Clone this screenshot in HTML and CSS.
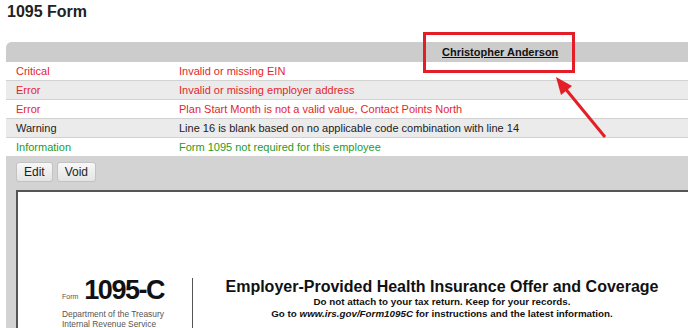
FILE: index.html
```html
<!DOCTYPE html>
<html lang="en">
<head>
    <meta charset="UTF-8">
    <meta name="viewport" content="width=device-width, initial-scale=1.0">
    <title>1095 Form</title>
    <link rel="stylesheet" href="styles.css">
</head>
<body>

<h1 class="page-title">1095 Form</h1>

<div class="panel">
    <div class="panel-head">
        <a href="#" class="emp-name">Christopher Anderson</a>
    </div>

    <div class="msgs">
        <div class="msg-row critical"><span>Critical</span><span>Invalid or missing EIN</span></div>
        <div class="msg-row error alt"><span>Error</span><span>Invalid or missing employer address</span></div>
        <div class="msg-row error"><span>Error</span><span>Plan Start Month is not a valid value, Contact Points North</span></div>
        <div class="msg-row warning alt"><span>Warning</span><span>Line 16 is blank based on no applicable code combination with line 14</span></div>
        <div class="msg-row info"><span>Information</span><span>Form 1095 not required for this employee</span></div>
    </div>

    <div class="actions">
        <button id="editForm">Edit</button>
        <button id="voidForm">Void</button>
    </div>

    <div class="viewer">
        <div class="form-doc">
            <div class="form-head">
                <div class="form-id">
                    <div class="form-num"><span class="form-word">Form</span> 1095-C</div>
                    <div class="dept">Department of the Treasury</div>
                    <div class="dept">Internal Revenue Service</div>
                </div>
                <div class="form-title">
                    <div class="title-main">Employer-Provided Health Insurance Offer and Coverage</div>
                    <div class="title-sub">Do not attach to your tax return. Keep for your records.</div>
                    <div class="title-sub">Go to <i>www.irs.gov/Form1095C</i> for instructions and the latest information.</div>
                </div>
            </div>
            <div class="part-row">
                <div class="part-label">Part I</div>
                <div class="part-name">Employee</div>
                <div class="part-right">Applicable Large Employer Member (Employer)</div>
            </div>
        </div>
    </div>
</div>

<!-- callout drawn over the screenshot -->
<svg class="callout" width="688" height="328" viewBox="0 0 688 328">
    <rect x="424.5" y="33.5" width="149" height="38" fill="none" stroke="#e41e26" stroke-width="3"/>
    <line x1="605" y1="137" x2="564" y2="87" stroke="#e41e26" stroke-width="3"/>
    <polygon points="556,77 572,86 561,95" fill="#e41e26"/>
</svg>

</body>
</html>
```

FILE: styles.css
```css
body {
    margin: 0;
    font-family: "Liberation Sans", Arial, sans-serif;
    color: #222;
    overflow: hidden;
    height: 328px;
    position: relative;
}
.page-title {
    font-size: 16px;
    line-height: 20px;
    margin: 2px 0 0 7px;
    color: #222;
}
.panel {
    margin: 20px 0 0 6px;
    width: 760px;
    background: #d3d3d3;
    border-radius: 6px 0 0 0;
}
.panel-head {
    height: 20px;
    line-height: 20px;
    background: #cccccc;
    border-radius: 6px 0 0 0;
    padding-left: 436px;
    font-size: 11px;
    font-weight: bold;
}
.emp-name {
    color: #111;
    text-decoration: underline;
}
.msgs {
    background: #fff;
    font-size: 11px;
}
.msg-row {
    display: grid;
    grid-template-columns: 163px 1fr;
    padding-left: 10px;
    height: 18px;
    line-height: 18px;
    border-bottom: 1px solid #d2d2d2;
}
.msg-row.alt {
    background: #ebebeb;
}
.critical, .error {
    color: #e4262c;
}
.warning {
    color: #222;
}
.info {
    color: #279a27;
}
.actions {
    display: flex;
    gap: 4px;
    align-items: flex-start;
    height: 33px;
    box-sizing: border-box;
    padding: 5px 10px 0;
}
.actions button {
    font-family: "Liberation Sans", Arial, sans-serif;
    font-size: 12px;
    height: 20px;
    padding: 0 7px;
    border: 1px solid #c2c2c2;
    border-radius: 3px;
    background: linear-gradient(#f8f8f8, #e4e4e4);
    color: #222;
}
.viewer {
    margin-left: 10px;
    border-top: 2px solid #555;
    border-left: 2px solid #555;
    background: #fff;
    height: 200px;
}
.form-doc {
    padding: 86px 0 0 44px;
    color: #111;
}
.form-head {
    display: flex;
    width: 800px;
    border-bottom: 1px solid #333;
}
.form-id {
    width: 130px;
    border-right: 1px solid #555;
}
.form-num {
    font-size: 27px;
    line-height: 24px;
    font-weight: bold;
    letter-spacing: -1.5px;
}
.form-word {
    font-size: 7px;
    font-weight: normal;
    color: #555;
    letter-spacing: 0;
}
.dept {
    font-size: 8.4px;
    line-height: 10px;
    color: #555;
}
.form-title {
    width: 498px;
    text-align: center;
    padding-bottom: 2px;
}
.title-main {
    font-size: 16px;
    line-height: 18px;
    font-weight: bold;
}
.title-sub {
    font-size: 9.8px;
    line-height: 12px;
    font-weight: bold;
}
.part-row {
    display: flex;
    height: 14px;
    font-weight: bold;
}
.part-label {
    width: 43px;
    background: #000;
    color: #fff;
    font-size: 11px;
    text-align: center;
    line-height: 14px;
}
.part-name {
    width: 393px;
    padding-left: 10px;
    font-size: 12px;
    line-height: 16px;
}
.part-right {
    border-left: 1px solid #555;
    padding-left: 54px;
    font-size: 13px;
    line-height: 16px;
}
.callout {
    position: absolute;
    top: 0;
    left: 0;
    pointer-events: none;
}
```
